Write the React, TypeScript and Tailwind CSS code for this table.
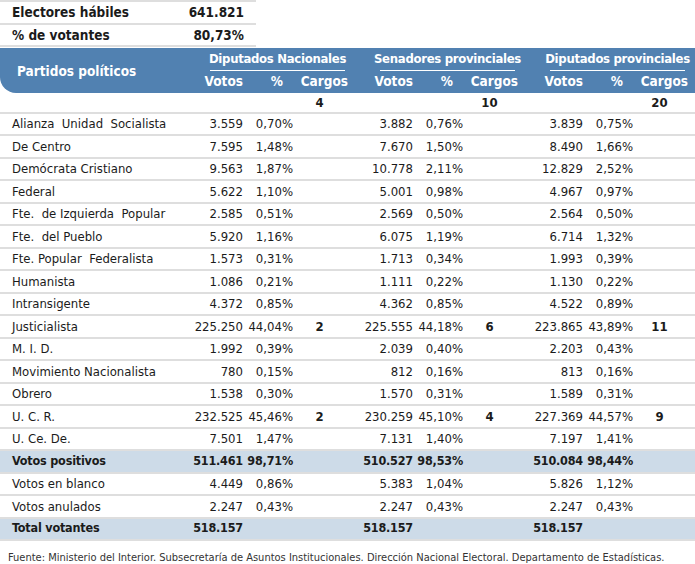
import * as React from "react";

type Cell = [string, string, string];

interface Row {
  name: string;
  dn: Cell;
  sp: Cell;
  dp: Cell;
  total?: boolean;
}

const rows: Row[] = [
  { name: "Alianza  Unidad  Socialista", dn: ["3.559", "0,70%", ""], sp: ["3.882", "0,76%", ""], dp: ["3.839", "0,75%", ""] },
  { name: "De Centro", dn: ["7.595", "1,48%", ""], sp: ["7.670", "1,50%", ""], dp: ["8.490", "1,66%", ""] },
  { name: "Demócrata Cristiano", dn: ["9.563", "1,87%", ""], sp: ["10.778", "2,11%", ""], dp: ["12.829", "2,52%", ""] },
  { name: "Federal", dn: ["5.622", "1,10%", ""], sp: ["5.001", "0,98%", ""], dp: ["4.967", "0,97%", ""] },
  { name: "Fte.  de Izquierda  Popular", dn: ["2.585", "0,51%", ""], sp: ["2.569", "0,50%", ""], dp: ["2.564", "0,50%", ""] },
  { name: "Fte.  del Pueblo", dn: ["5.920", "1,16%", ""], sp: ["6.075", "1,19%", ""], dp: ["6.714", "1,32%", ""] },
  { name: "Fte. Popular  Federalista", dn: ["1.573", "0,31%", ""], sp: ["1.713", "0,34%", ""], dp: ["1.993", "0,39%", ""] },
  { name: "Humanista", dn: ["1.086", "0,21%", ""], sp: ["1.111", "0,22%", ""], dp: ["1.130", "0,22%", ""] },
  { name: "Intransigente", dn: ["4.372", "0,85%", ""], sp: ["4.362", "0,85%", ""], dp: ["4.522", "0,89%", ""] },
  { name: "Justicialista", dn: ["225.250", "44,04%", "2"], sp: ["225.555", "44,18%", "6"], dp: ["223.865", "43,89%", "11"] },
  { name: "M. I. D.", dn: ["1.992", "0,39%", ""], sp: ["2.039", "0,40%", ""], dp: ["2.203", "0,43%", ""] },
  { name: "Movimiento Nacionalista", dn: ["780", "0,15%", ""], sp: ["812", "0,16%", ""], dp: ["813", "0,16%", ""] },
  { name: "Obrero", dn: ["1.538", "0,30%", ""], sp: ["1.570", "0,31%", ""], dp: ["1.589", "0,31%", ""] },
  { name: "U. C. R.", dn: ["232.525", "45,46%", "2"], sp: ["230.259", "45,10%", "4"], dp: ["227.369", "44,57%", "9"] },
  { name: "U. Ce. De.", dn: ["7.501", "1,47%", ""], sp: ["7.131", "1,40%", ""], dp: ["7.197", "1,41%", ""] },
  { name: "Votos positivos", dn: ["511.461", "98,71%", ""], sp: ["510.527", "98,53%", ""], dp: ["510.084", "98,44%", ""], total: true },
  { name: "Votos en blanco", dn: ["4.449", "0,86%", ""], sp: ["5.383", "1,04%", ""], dp: ["5.826", "1,12%", ""] },
  { name: "Votos anulados", dn: ["2.247", "0,43%", ""], sp: ["2.247", "0,43%", ""], dp: ["2.247", "0,43%", ""] },
  { name: "Total votantes", dn: ["518.157", "", ""], sp: ["518.157", "", ""], dp: ["518.157", "", ""], total: true },
];

const groups = ["Diputados Nacionales", "Senadores provinciales", "Diputados provinciales"];

const font = { fontFamily: "'DejaVu Sans Condensed', 'DejaVu Sans', sans-serif" };

function GroupCells({ cell }: { cell: Cell }) {
  return (
    <>
      <div className="text-right pr-[2px]">{cell[0]}</div>
      <div className="text-right pr-[2px]">{cell[1]}</div>
      <div className="text-center pr-[6px] font-bold">{cell[2]}</div>
    </>
  );
}

export default function App() {
  return (
    <div className="w-[695px] h-[564px] bg-white text-[#1b1b1b] whitespace-pre" style={font}>
      {/* Summary rows */}
      <div className="w-[256px] border-t-2 border-[#dedede]">
        <div className="flex items-center justify-between h-[22.5px] pl-[12px] pr-[12px] border-b-2 border-[#dedede] text-[13.5px] font-bold">
          <span>Electores hábiles</span>
          <span>641.821</span>
        </div>
        <div className="flex items-center justify-between h-[22.5px] pl-[12px] pr-[12px] border-b-2 border-[#dedede] text-[13.5px] font-bold">
          <span>% de votantes</span>
          <span>80,73%</span>
        </div>
      </div>

      {/* Blue header */}
      <div className="flex h-[45px] mt-[0.5px] bg-[#5181b1] text-white font-bold rounded-bl-[16px] text-[13.5px]">
        <div className="w-[180px] flex items-center pl-[17px] pt-[2px]">Partidos políticos</div>
        {groups.map((g) => (
          <div key={g} className="w-[170px] flex flex-col">
            <div className="ml-[30px] mr-[5px] h-[23px] flex items-center justify-center border-b-[1.5px] border-white text-[13px] tracking-[-0.3px]">
              {g}
            </div>
            <div className="grid grid-cols-[65px_50px_55px] flex-1 items-center">
              <div className="text-right pr-[2px]">Votos</div>
              <div className="text-right pr-[12px]">%</div>
              <div className="text-right pr-[2px]">Cargos</div>
            </div>
          </div>
        ))}
      </div>

      {/* Total seats */}
      <div className="grid grid-cols-[180px_repeat(3,65px_50px_55px)] h-[21px] items-center border-b-2 border-[#dedede] text-[13px] font-bold">
        <div />
        <GroupCells cell={["", "", "4"]} />
        <GroupCells cell={["", "", "10"]} />
        <GroupCells cell={["", "", "20"]} />
      </div>

      {rows.map((r) => (
        <div
          key={r.name}
          className={
            r.total
              ? "grid grid-cols-[180px_repeat(3,65px_50px_55px)] h-[22.5px] items-center border-b-2 border-[#dedede] bg-[#cddbe8] font-bold text-[12.5px] tracking-[-0.2px]"
              : "grid grid-cols-[180px_repeat(3,65px_50px_55px)] h-[22.5px] items-center border-b-2 border-[#dedede] text-[13px]"
          }
        >
          <div className="pl-[12px]">{r.name}</div>
          <GroupCells cell={r.dn} />
          <GroupCells cell={r.sp} />
          <GroupCells cell={r.dp} />
        </div>
      ))}

      <div className="pl-[8px] pt-[9px] text-[11px] text-[#333]">
        Fuente: Ministerio del Interior. Subsecretaría de Asuntos Institucionales. Dirección Nacional Electoral. Departamento de Estadísticas.
      </div>
    </div>
  );
}
